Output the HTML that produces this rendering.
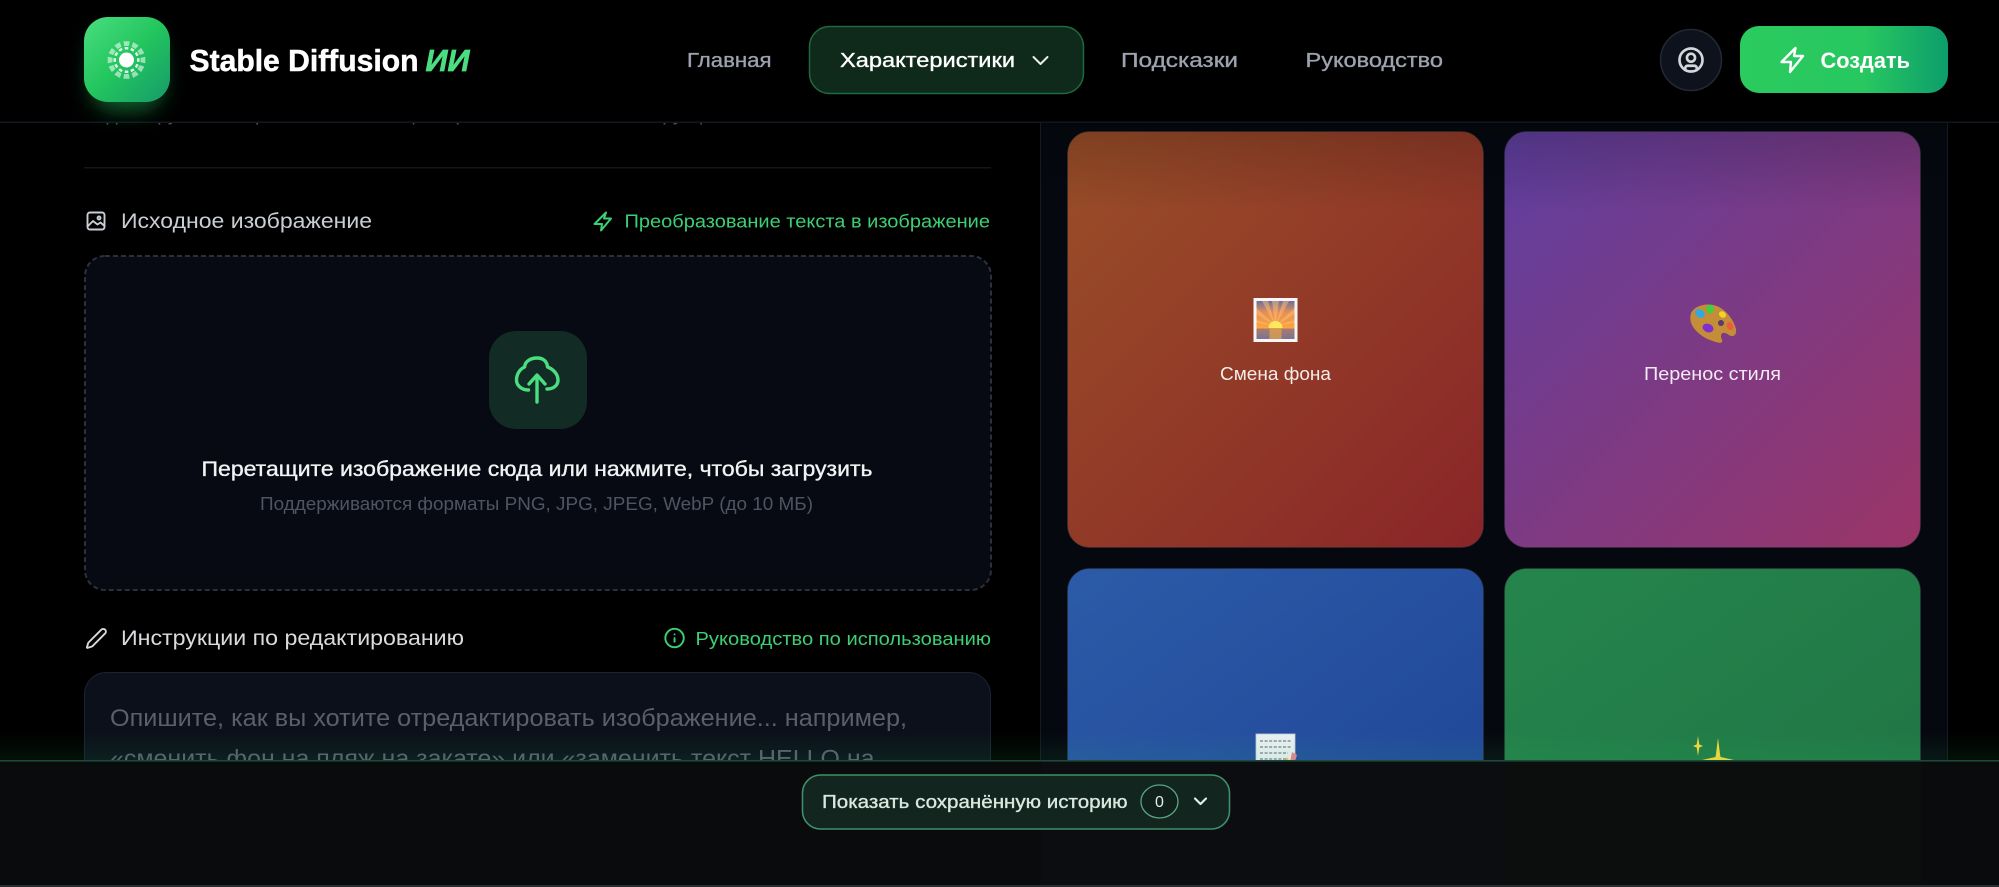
<!DOCTYPE html>
<html lang="ru"><head><meta charset="utf-8"><title>Stable Diffusion ИИ</title>
<style>
html,body{margin:0;padding:0;background:#000;width:1999px;height:887px;overflow:hidden}
svg{display:block}
text{font-family:"Liberation Sans","DejaVu Sans",sans-serif}
.m{stroke-width:.35;paint-order:stroke}
.i{fill:none;stroke-linecap:round;stroke-linejoin:round}
</style></head><body>
<svg xmlns="http://www.w3.org/2000/svg" width="1999" height="887" viewBox="0 0 1999 887">
<defs>
<linearGradient id="c1" x1="0" y1="0" x2="1" y2="1"><stop offset="0" stop-color="#9a4f28"/><stop offset="1" stop-color="#8a2528"/></linearGradient>
<linearGradient id="c2" x1="0" y1="0" x2="1" y2="1"><stop offset="0" stop-color="#5f3fa0"/><stop offset="1" stop-color="#9b3568"/></linearGradient>
<linearGradient id="c3" x1="0" y1="0" x2="1" y2="1"><stop offset="0" stop-color="#2c5ba8"/><stop offset="1" stop-color="#1f4496"/></linearGradient>
<linearGradient id="c4" x1="0" y1="0" x2="1" y2="1"><stop offset="0" stop-color="#25854c"/><stop offset="1" stop-color="#207444"/></linearGradient>
<linearGradient id="fade" x1="0" y1="0" x2="0" y2="1"><stop offset="0" stop-color="#000" stop-opacity=".2"/><stop offset="1" stop-color="#000" stop-opacity="0"/></linearGradient>
<linearGradient id="logo" x1="0" y1="0" x2="1" y2="1"><stop offset="0" stop-color="#4ade80"/><stop offset=".5" stop-color="#22c55e"/><stop offset="1" stop-color="#169a6a"/></linearGradient>
<linearGradient id="btn" x1="0" y1="0" x2="1" y2="0"><stop offset="0" stop-color="#2acb5f"/><stop offset=".6" stop-color="#28c760"/><stop offset="1" stop-color="#0d9e6c"/></linearGradient>
<linearGradient id="glow" x1="0" y1="0" x2="0" y2="1"><stop offset="0" stop-color="#22c55e" stop-opacity="0"/><stop offset="1" stop-color="#22c55e" stop-opacity=".09"/></linearGradient>
<linearGradient id="sky" x1="0" y1="0" x2="0" y2="1"><stop offset="0" stop-color="#6b6f9e"/><stop offset=".3" stop-color="#e58f58"/><stop offset=".72" stop-color="#fba63c"/><stop offset=".73" stop-color="#a87a72"/><stop offset="1" stop-color="#7d7390"/></linearGradient>
<filter id="b12" x="-50%" y="-50%" width="200%" height="200%"><feGaussianBlur stdDeviation="11"/></filter>
<clipPath id="memoClip"><rect x="0" y="0" width="1999" height="761"/></clipPath>
<g id="ray"><polygon points="-1.700,-10.500 1.700,-10.500 1.900,-13 -1.900,-13" fill="#fff" fill-opacity=".85"/><polygon points="-2.300,-14 2.300,-14 3.200,-18.800 -3.200,-18.800" fill="#fff" fill-opacity=".55"/></g>
</defs>

<rect width="1999" height="887" fill="#000"/>

<!-- right panel -->
<rect x="1040.500" y="100" width="907" height="700" fill="#05080f" stroke="#141a22"/>
<rect x="1067.500" y="131.500" width="416" height="416" rx="22" fill="url(#c1)" stroke="#2d3038" stroke-opacity=".5"/>
<rect x="1504.500" y="131.500" width="416" height="416" rx="22" fill="url(#c2)" stroke="#2d3038" stroke-opacity=".5"/>
<rect x="1067.500" y="568.500" width="416" height="300" rx="22" fill="url(#c3)" stroke="#2d3038" stroke-opacity=".5"/>
<rect x="1504.500" y="568.500" width="416" height="300" rx="22" fill="url(#c4)" stroke="#2d3038" stroke-opacity=".5"/>
<rect x="1041" y="122" width="906" height="90" fill="url(#fade)"/>

<!-- sunset picture -->
<rect x="1253.500" y="298" width="44" height="44" fill="#f6f6f6"/>
<rect x="1256.500" y="301" width="38" height="38" fill="url(#sky)"/>
<path d="M1275.500 326 1262 301h6zM1275.500 326 1272 301h7zM1275.500 326 1283 301h6zM1275.500 326 1256.500 308v6zM1275.500 326 1294.500 308v6zM1275.500 326 1256.500 320v3zM1275.500 326 1294.500 320v3z" fill="#ffc070" fill-opacity=".5"/>
<path d="M1268.500 328a7 7 0 0 1 14 0z" fill="#ffe75e"/>
<rect x="1269.500" y="328" width="12" height="11" fill="#e2a24a" fill-opacity=".75"/>
<text x="1220" y="380" font-size="18.500" fill="#f3eee9" textLength="111" lengthAdjust="spacingAndGlyphs">Смена фона</text>

<!-- palette -->
<g>
<path d="M1691 313c4-8 18-11 28-6 9 5 15 14 17 22 1 6-3 9-7 6-4-3-8-3-8 1 0 3 2 4 1 6-1 2-7 0-12-2-8-3-15-9-18-15-2-4-2-8-1-12z" fill="#c48d38"/>
<ellipse cx="1700" cy="313.500" rx="5.200" ry="4" transform="rotate(35 1700 313.500)" fill="#32a8e0"/>
<ellipse cx="1710" cy="309" rx="3.800" ry="4.400" fill="#3fcf3f"/>
<ellipse cx="1722.500" cy="314.500" rx="3.800" ry="3" transform="rotate(35 1722.500 314.500)" fill="#f3d22a"/>
<ellipse cx="1730" cy="326" rx="3.200" ry="4.200" transform="rotate(-25 1730 326)" fill="#ec5c3c"/>
<ellipse cx="1708" cy="328" rx="5.600" ry="4.200" transform="rotate(20 1708 328)" fill="#7d2fcf"/>
<circle cx="1721" cy="323" r="3" fill="#5a3a6a"/>
</g>
<text x="1644" y="380" font-size="18.500" fill="#f3eaf3" textLength="137" lengthAdjust="spacingAndGlyphs">Перенос стиля</text>

<!-- memo + sparkles -->
<g clip-path="url(#memoClip)">
<rect x="1256" y="734" width="39" height="40" fill="#e9eff2" stroke="#c4ced8" stroke-width=".8"/>
<g stroke="#59626e" stroke-width="1.100" stroke-dasharray="3 1.600"><path d="M1260 741h31M1260 747h31M1260 753h28M1260 759h26"/></g>
<path d="M1292 752l5 3-3 9-4-2z" fill="#e8848e"/>
<path d="M1283 765l4-8 5 8z" fill="#f2c230"/>
<path d="M1698 736l1.300 8.500 3.700 1.500-3.700 1.500-1.300 8.500-1.300-8.500-3.700-1.500 3.700-1.500z" fill="#f6d83c"/>
<path d="M1718 738l2 16 .5 3 13.500 3-12 2-4 8-4-8-12-2 13.500-3 .5-3z" fill="#f6d83c"/>
</g>

<!-- left column -->
<text x="84" y="120.500" font-size="19" fill="#4f5463" textLength="640" lengthAdjust="spacingAndGlyphs">Редактируйте изображения с помощью простых текстовых инструкций</text>
<rect x="84" y="167" width="907" height="1.500" fill="#12161d"/>

<g class="i" stroke="#c9cdd4" stroke-width="1.900"><rect x="87.500" y="212.500" width="17" height="17" rx="2.500"/><path d="M88 226l5-5 4.500 3.500 3-2 3.500 3M99 216.500a1.500 1.500 0 1 0 .01 0"/></g>
<text x="121" y="228" font-size="21" fill="#c9cdd4" textLength="251" lengthAdjust="spacingAndGlyphs">Исходное изображение</text>
<path class="i" d="M606 212.500 594.500 224 602 224 601 230.500 611 218.500 604 218.500z" stroke="#3ccf73" stroke-width="2"/>
<text x="624.500" y="227.500" font-size="18.500" fill="#3ccf73" textLength="365.500" lengthAdjust="spacingAndGlyphs">Преобразование текста в изображение</text>

<rect x="85" y="256" width="906" height="334" rx="20" fill="#070a12" stroke="#2a303c" stroke-width="2" stroke-dasharray="5 3"/>
<rect x="489" y="331" width="98" height="98" rx="27" fill="#122b24"/>
<g class="i" stroke="#4ade80" stroke-width="3.400"><path d="M528.500 390C521 390 516.500 385 516.500 380 516.500 374 520 369 524.600 367 525 361 531 358 537 358 543 358 547 361 547.500 367 553 369 558 374 558 380 558 385 554 389 547 389"/><path d="M537 402V376M529 384 537 375 545 384"/></g>
<text x="201.500" y="476" font-size="21.500" fill="#f2f3f5" class="m" stroke="#f2f3f5" textLength="671" lengthAdjust="spacingAndGlyphs">Перетащите изображение сюда или нажмите, чтобы загрузить</text>
<text x="260" y="510" font-size="18.500" fill="#4f5463" textLength="553" lengthAdjust="spacingAndGlyphs">Поддерживаются форматы PNG, JPG, JPEG, WebP (до 10 МБ)</text>

<path class="i" transform="translate(85 627) scale(.95)" d="M21.174 6.812a1 1 0 0 0-3.986-3.987L3.842 16.174a2 2 0 0 0-.5.83l-1.321 4.352a.5.5 0 0 0 .623.622l4.353-1.32a2 2 0 0 0 .83-.497z" stroke="#d6d8dc" stroke-width="2"/>
<text x="121" y="645" font-size="21" fill="#d9dbdf" textLength="343" lengthAdjust="spacingAndGlyphs">Инструкции по редактированию</text>
<g class="i" transform="translate(663.500 627) scale(.92)" stroke="#3ccf73" stroke-width="2.100"><circle cx="12" cy="12" r="10"/><path d="M12 16v-4M12 8h.01"/></g>
<text x="695.500" y="645" font-size="18.500" fill="#3ccf73" textLength="295.500" lengthAdjust="spacingAndGlyphs">Руководство по использованию</text>

<rect x="84.500" y="672.500" width="906" height="200" rx="22" fill="#0b101a" stroke="#1c2230"/>
<text x="110" y="726" font-size="24" fill="#5a5f6b" textLength="797" lengthAdjust="spacingAndGlyphs">Опишите, как вы хотите отредактировать изображение... например,</text>
<text x="110" y="766.500" font-size="24" fill="#5a5f6b" textLength="764.500" lengthAdjust="spacingAndGlyphs">«сменить фон на пляж на закате» или «заменить текст HELLO на</text>

<!-- header -->
<rect width="1999" height="122" fill="#000"/>
<rect y="121.500" width="1999" height="1.500" fill="#12161e"/>
<rect x="92" y="34" width="70" height="76" rx="22" fill="#22c55e" fill-opacity=".5" filter="url(#b12)"/>
<rect x="84" y="17" width="86" height="85" rx="24" fill="url(#logo)"/>
<g transform="translate(126.500 60)">
<use href="#ray"/><use href="#ray" transform="rotate(30)"/><use href="#ray" transform="rotate(60)"/><use href="#ray" transform="rotate(90)"/><use href="#ray" transform="rotate(120)"/><use href="#ray" transform="rotate(150)"/><use href="#ray" transform="rotate(180)"/><use href="#ray" transform="rotate(210)"/><use href="#ray" transform="rotate(240)"/><use href="#ray" transform="rotate(270)"/><use href="#ray" transform="rotate(300)"/><use href="#ray" transform="rotate(330)"/>
<circle r="7.500" fill="#fff"/>
</g>
<text x="189.500" y="71" font-size="31" font-weight="700" fill="#fff" stroke="#fff" stroke-width=".5" textLength="229" lengthAdjust="spacingAndGlyphs">Stable Diffusion</text>
<text x="425.500" y="71" font-size="31" font-weight="700" font-style="italic" fill="#4ade80" stroke="#4ade80" stroke-width=".7" textLength="44" lengthAdjust="spacingAndGlyphs">ИИ</text>

<text x="687" y="67" font-size="20.500" fill="#9ca3af" class="m" stroke="#9ca3af" textLength="84.500" lengthAdjust="spacingAndGlyphs">Главная</text>
<rect x="809.500" y="26.500" width="274" height="67" rx="20" fill="#0f2a1b" stroke="#1f6a3c" stroke-width="1.500"/>
<text x="840" y="67" font-size="20.500" fill="#fff" class="m" stroke="#fff" textLength="175" lengthAdjust="spacingAndGlyphs">Характеристики</text>
<path class="i" d="M1033.500 57l7 7 7-7" stroke="#e8efe9" stroke-width="2"/>
<text x="1121" y="67" font-size="20.500" fill="#9ca3af" class="m" stroke="#9ca3af" textLength="117" lengthAdjust="spacingAndGlyphs">Подсказки</text>
<text x="1305.500" y="67" font-size="20.500" fill="#9ca3af" class="m" stroke="#9ca3af" textLength="137.500" lengthAdjust="spacingAndGlyphs">Руководство</text>

<circle cx="1691" cy="60" r="30.500" fill="#0e121c" stroke="#232833" stroke-width="1.500"/>
<g class="i" transform="translate(1677.200 46.200) scale(1.150)" stroke="#d3d6db" stroke-width="2.300"><circle cx="12" cy="12" r="10"/><circle cx="12" cy="10" r="3.500"/><path d="M7 20.662V19a2 2 0 0 1 2-2h6a2 2 0 0 1 2 2v1.662"/></g>
<rect x="1740" y="26" width="208" height="67" rx="19" fill="url(#btn)"/>
<path class="i" d="M1795.500 48 1781.500 62 1791 62 1790 72 1803 56 1794 56z" stroke="#fff" stroke-width="2.400"/>
<text x="1820.500" y="68" font-size="22" font-weight="700" fill="#fff" textLength="89.500" lengthAdjust="spacingAndGlyphs">Создать</text>

<!-- footer -->
<rect y="732" width="1999" height="29" fill="url(#glow)"/>
<rect y="761" width="1999" height="124" fill="#0a0b0d"/>
<rect x="1041" y="761" width="465" height="124" fill="#0b0d10"/>
<rect x="1506" y="761" width="415" height="124" fill="#0b0e0d"/>
<rect y="760" width="1999" height="1.600" fill="#1a4a38"/>
<rect y="885" width="1999" height="2" fill="#2a2d30"/>
<rect x="802.500" y="775" width="427" height="54" rx="18" fill="#12251f" stroke="#3f8f6a" stroke-width="1.600"/>
<text x="822" y="808" font-size="18.500" fill="#dbe8df" class="m" stroke="#dbe8df" textLength="305.500" lengthAdjust="spacingAndGlyphs">Показать сохранённую историю</text>
<ellipse cx="1159.500" cy="801.500" rx="18.500" ry="16.500" fill="#10211c" stroke="#5aa583" stroke-width="1.300"/>
<text x="1159.500" y="807" font-size="16" fill="#e3ece6" text-anchor="middle">0</text>
<path class="i" d="M1195 798.500l5.500 5.500 5.500-5.500" stroke="#e3ece6" stroke-width="2.200"/>
</svg>
</body></html>
